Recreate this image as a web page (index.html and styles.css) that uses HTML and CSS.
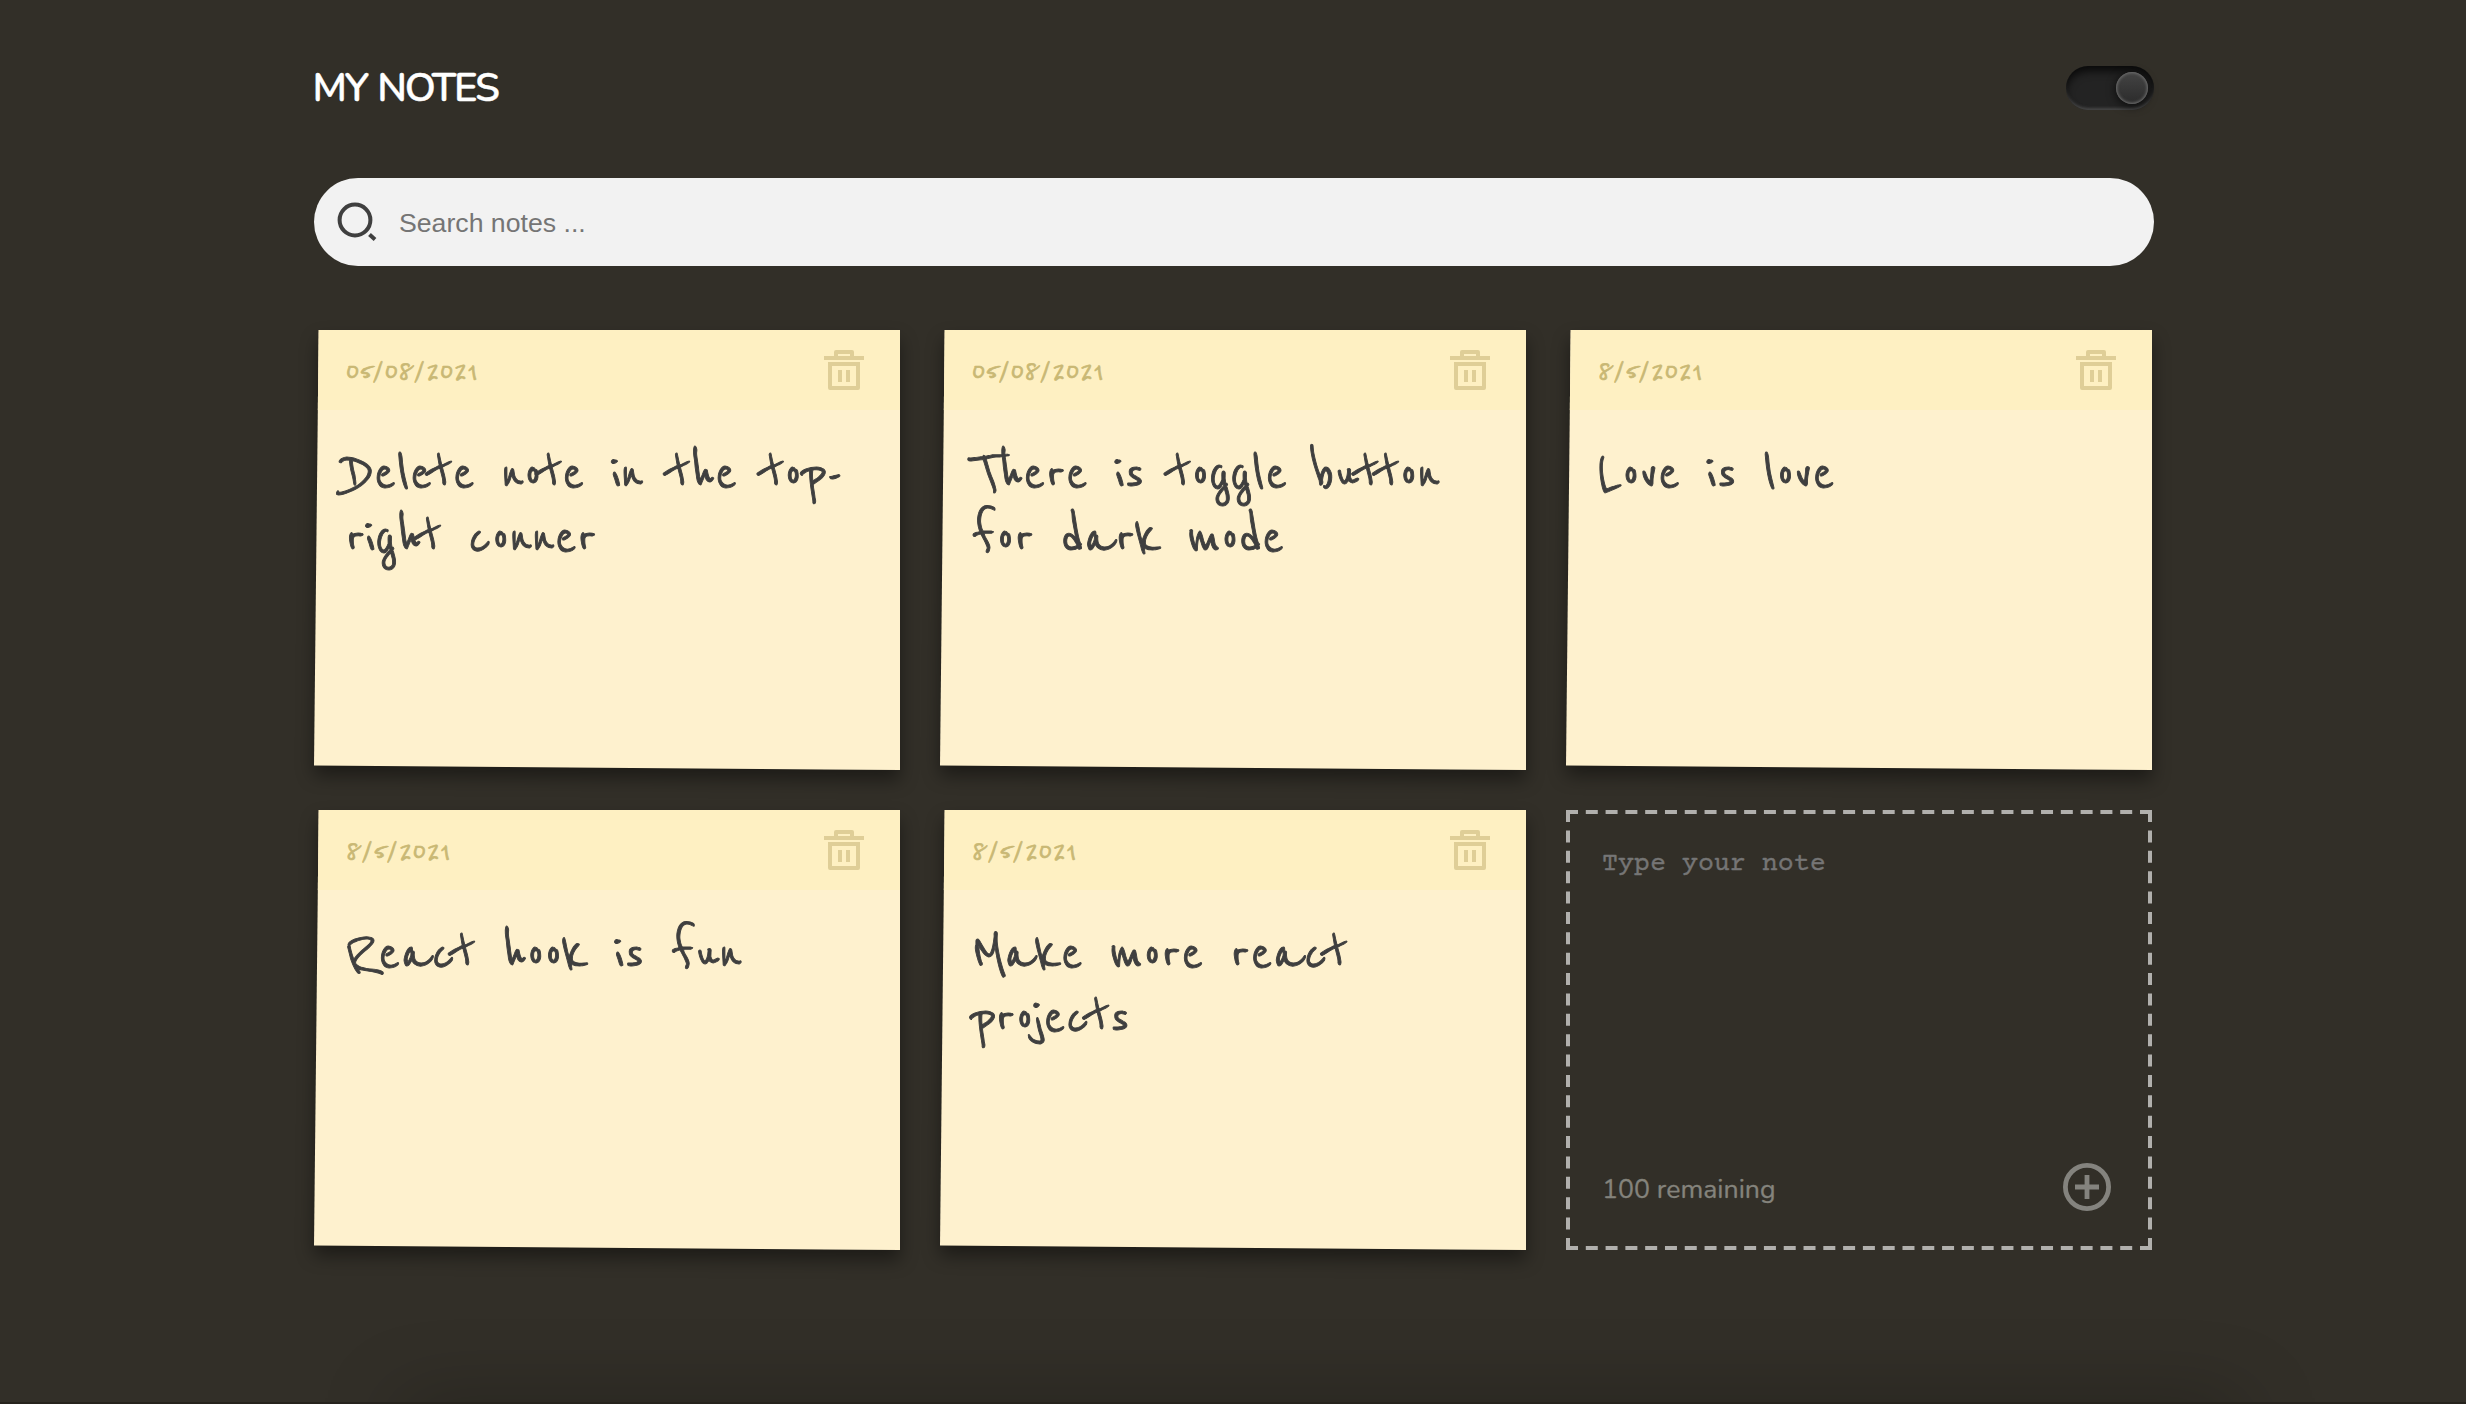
FILE: index.html
```html
<!DOCTYPE html>
<html lang="en">
<head>
<meta charset="utf-8">
<title>My Notes</title>
<link rel="stylesheet" href="styles.css">
</head>
<body>
<svg class="sprite" aria-hidden="true">
  <symbol id="trash" viewBox="0 0 40 40">
    <path fill-rule="evenodd" d="M0 6H10V2Q10 0 12 0H28Q30 0 30 2V6H40V10H0ZM14 4V6H26V4Z"/>
    <path fill-rule="evenodd" d="M4 12H36V38Q36 40 34 40H6Q4 40 4 38ZM8 16V36H32V16Z"/>
    <path d="M14 20H18V32H14ZM22 20H26V32H22Z"/>
  </symbol>
</svg>
<main class="container">
  <header class="header">
    <h1 class="title">MY NOTES</h1>
    <div class="toggle"><span class="knob"></span></div>
  </header>
  <div class="search">
    <svg class="search-icon" viewBox="0 0 48 48"><circle cx="23" cy="22" r="15.4"/><path d="M37.5 36.500L43 41.500"/></svg>
    <input class="search-input" type="text" placeholder="Search notes ...">
  </div>
  <section class="notes">
    <article class="note"><div class="sheet">
      <div class="note-head"><span>05/08/2021</span><svg class="trash"><use href="#trash"/></svg></div>
      <p class="note-text">Delete note in the top-<br>right conner</p>
    </div></article>
    <article class="note"><div class="sheet">
      <div class="note-head"><span>05/08/2021</span><svg class="trash"><use href="#trash"/></svg></div>
      <p class="note-text">There is toggle button<br>for dark mode</p>
    </div></article>
    <article class="note"><div class="sheet">
      <div class="note-head"><span>8/5/2021</span><svg class="trash"><use href="#trash"/></svg></div>
      <p class="note-text">Love is love</p>
    </div></article>
    <article class="note"><div class="sheet">
      <div class="note-head"><span>8/5/2021</span><svg class="trash"><use href="#trash"/></svg></div>
      <p class="note-text">React hook is fun</p>
    </div></article>
    <article class="note"><div class="sheet">
      <div class="note-head"><span>8/5/2021</span><svg class="trash"><use href="#trash"/></svg></div>
      <p class="note-text">Make more react<br>projects</p>
    </div></article>
    <article class="new-note">
      <svg class="dashes" viewBox="0 0 586 440">
        <path stroke-dasharray="12 7.793" d="M0 2H586M0 438H586"/>
        <path stroke-dasharray="12 8.381" d="M2 0V440M584 0V440"/>
      </svg>
      <textarea class="new-text" placeholder="Type your note"></textarea>
      <div class="new-foot"><span class="remaining">100 remaining</span>
        <svg class="plus" viewBox="0 0 48 48"><circle cx="24" cy="24" r="21.600"/><path d="M12 24H36M24 12V36"/></svg>
      </div>
    </article>
  </section>
</main>
<div class="dock-shadow"></div>
</body>
</html>
```
FILE: styles.css
```css
* { box-sizing: border-box; }
body {
  margin: 0;
  height: 1404px;
  overflow: hidden;
  position: relative;
  background: #322f28;
  font-family: Nunito, "Open Sans", sans-serif;
}
.sprite { display: none; }
.container { width: 1840px; margin-left: 314px; padding-top: 56px; }
.header { display: flex; justify-content: space-between; align-items: center; height: 64px; }
.title {
  margin: 0 0 0 -1.5px; font-size: 40px; font-weight: 600; line-height: 64px;
  letter-spacing: -2.2px; word-spacing: 2px; color: #fff; -webkit-text-stroke: 0.4px #fff;
}
.toggle {
  width: 88px; height: 44px; border-radius: 22px; padding: 6px;
  display: flex; justify-content: flex-end; align-items: center;
  background: #232323;
  box-shadow: inset 0 6px 8px -1px rgba(0,0,0,.75), inset 0 -3px 3px -1px #4a4a4a;
}
.knob {
  width: 32px; height: 32px; border-radius: 50%;
  background: linear-gradient(#444, #2b2b2b);
  box-shadow: inset 0 0 3px 1px #707070, 0 2px 8px 1px rgba(0,0,0,.6);
}
.search {
  display: flex; align-items: center; gap: 19px;
  height: 88px; margin-top: 58px; padding: 0 36px 0 18px;
  border-radius: 44px; background: #f2f2f2;
}
.search-icon { width: 48px; height: 48px; fill: none; stroke: #3f3f3f; stroke-width: 4; }
.search-input {
  flex: 1; border: 0; padding: 2px 0 0; margin: 0; background: none; outline: none;
  font: 26.667px "Liberation Sans", Arial, sans-serif;
}
.search-input::placeholder { color: #757575; }
.notes {
  display: grid; grid-template-columns: repeat(3, 586px); grid-auto-rows: 440px;
  gap: 40px; margin-top: 64px;
}
.note { filter: drop-shadow(0 10px 9px rgba(0,0,0,.42)); }
.sheet {
  height: 440px; background: #fef1ce;
  clip-path: polygon(0.8% 0, 100% 0, 100% 100%, 0 99%);
}
.note-head {
  height: 80px; padding: 1px 36px 0 31.5px; background: #fef0c2;
  display: flex; align-items: center; justify-content: space-between;
  font: 38.2px/40px "Reenie Beanie", Caveat, cursive; color: #c9b874;
  -webkit-text-stroke: 0.7px #c9b874;
}
.trash { width: 40px; height: 40px; margin-top: -1px; fill: #dfce97; }
.note-text {
  margin: 0; padding: 32px 31px 0 31.4px; white-space: nowrap;
  font: 64px/64px "Reenie Beanie", Caveat, cursive; color: #3f3f3f;
  -webkit-text-stroke: 0.9px #3f3f3f;
}
.new-note { position: relative; padding: 38px 41px 39px 36px; display: flex; flex-direction: column; justify-content: space-between; }
.dashes { position: absolute; left: 0; top: 0; width: 586px; height: 440px; fill: none; stroke: #b1b0ad; stroke-width: 4; }
.new-text {
  border: 0; padding: 0; margin: 0; height: 200px; resize: none; outline: none; background: none;
  font: 26.667px/32px "Courier Prime", "Liberation Mono", monospace;
}
.new-text::placeholder { color: #757575; -webkit-text-stroke: 0.4px #757575; }
.new-foot { display: flex; justify-content: space-between; align-items: center; font-size: 26.667px; color: #84837c; -webkit-text-stroke: 0.3px #84837c; }
.remaining { padding-top: 4px; }
.plus { width: 48px; height: 48px; fill: none; stroke: #84837e; stroke-width: 4.8; }
/* soft shade of the bar that sits just below the window */
.dock-shadow {
  position: absolute; left: 400px; top: 1402px; width: 1840px; height: 60px;
  box-shadow: 0 0 80px rgba(0,0,0,.26);
}
.dock-shadow::before {
  content: ""; position: absolute; left: -400px; top: 0; width: 2466px; height: 2px; background: #26231d;
}
```
